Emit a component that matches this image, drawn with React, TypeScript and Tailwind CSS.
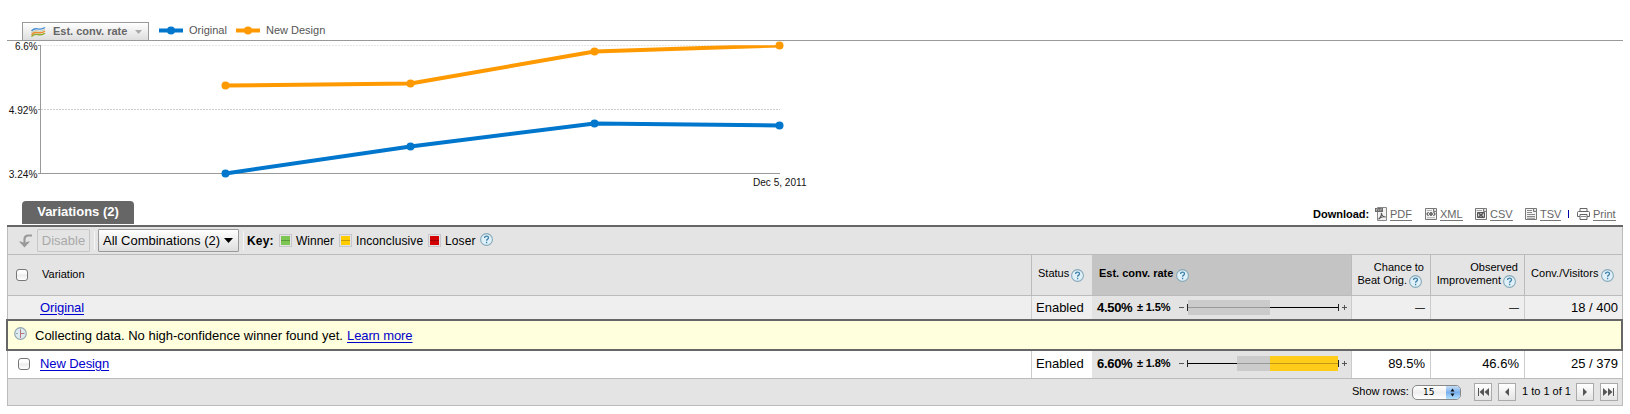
import React from "react";

const originalPoints: [number, number][] = [
  [225.5, 132.5],
  [410.5, 105.5],
  [594.5, 82.5],
  [779.5, 84.5],
];
const newDesignPoints: [number, number][] = [
  [225.5, 44.5],
  [410.5, 42.5],
  [594.5, 10.5],
  [779.5, 4.5],
];

function Series({ points, color }: { points: [number, number][]; color: string }) {
  return (
    <g>
      <polyline
        points={points.map((p) => p.join(",")).join(" ")}
        fill="none"
        stroke={color}
        strokeWidth="4"
        strokeLinejoin="round"
        clipPath="url(#plot)"
      />
      {points.map(([x, y]) => (
        <circle key={x} cx={x} cy={y} r="4" fill={color} />
      ))}
    </g>
  );
}

function Help({ className = "" }: { className?: string }) {
  return (
    <svg className={`size-[13px] shrink-0 ${className}`} viewBox="0 0 13 13">
      <circle cx="6.5" cy="6.5" r="5.9" fill="#dff0f8" stroke="#86a9b9" strokeWidth="1.1" />
      <path
        d="M4.6 5C4.6 2.5 8.5 2.6 8.5 4.9C8.5 6.1 6.6 6.2 6.6 7.8M6.6 8.8V10.2"
        fill="none"
        stroke="#3f82ab"
        strokeWidth="1.3"
      />
    </svg>
  );
}

function Check({ className = "" }: { className?: string }) {
  return (
    <span
      className={`block size-[12px] shrink-0 rounded-[3px] border border-[#777] bg-linear-to-b from-white from-30% via-[#ececec] via-50% to-white ${className}`}
    />
  );
}

function Swatch({ fill, line }: { fill: string; line: string }) {
  return (
    <span className="flex size-[13px] shrink-0 items-center justify-center border border-[#c6c6cc]">
      <span className={`flex size-[9px] items-center ${fill}`}>
        <span className={`h-px w-full ${line}`} />
      </span>
    </span>
  );
}

function LegendMark({ color, className }: { color: string; className: string }) {
  return (
    <svg className={`h-[9px] w-[24px] shrink-0 ${className}`} viewBox="0 0 24 9">
      <path d="M0 4.5H24" stroke={color} strokeWidth="4" />
      <circle cx="12" cy="4.5" r="4" fill={color} />
    </svg>
  );
}

function DocIcon({ kind }: { kind: "pdf" | "xml" | "csv" | "tsv" }) {
  if (kind === "pdf") {
    return (
      <svg className="mr-[3px] h-[14px] w-[12px] shrink-0" viewBox="0 0 12 14">
        <path d="M2.5 .5H11.5V13.5H2.5Z" fill="#f2f2f2" stroke="#888" />
        <path d="M0 1H8V5H0Z" fill="#6a6a6a" />
        <path d="M1.5 4V2H2.8M3.8 2V4M5.8 4V2H7" stroke="#ccc" strokeWidth=".7" fill="none" />
        <path
          d="M3.5 12.2C5.5 10.7 7 7.7 6.3 6C6.8 8.5 8.3 10 10.7 10C7.6 9.2 5.3 10.4 3.5 12.2Z"
          fill="none"
          stroke="#555"
          strokeWidth="1.2"
        />
      </svg>
    );
  }
  return (
    <svg className="mr-[3px] h-[14px] w-[12px] shrink-0" viewBox="0 0 12 14">
      <path d="M.5 1.5H11.5V12.5H.5Z" fill="#f4f4f4" stroke="#777" />
      <path d="M8.5 1.5V4.5H11.5" fill="#ccc" stroke="#777" />
      {kind === "xml" && (
        <g fill="none" stroke="#555">
          <path d="M3.5 5.2L1.9 7L3.5 8.8M8.5 5.2L10.1 7L8.5 8.8" strokeWidth="1.1" />
          <circle cx="6" cy="7" r="1.4" fill="#888" />
          <path d="M2 3.5H7M2 10.7H10" strokeOpacity=".4" />
        </g>
      )}
      {kind === "csv" && (
        <g fill="none" stroke="#555">
          <path d="M1.5 3.5H7" strokeOpacity=".5" />
          <path d="M2.5 5.5H9.5V10.5H2.5Z" fill="#ccc" />
          <path d="M3.6 6L8.2 10.2M8.2 6L3.6 10.2" strokeWidth="1.5" />
        </g>
      )}
      {kind === "tsv" && (
        <path d="M2 3.5H7M2 5.5H7M2 7.5H10M2 9.5H10M2 11.2H10" stroke="#888" />
      )}
    </svg>
  );
}

function Download({ kind, label, width }: { kind: "pdf" | "xml" | "csv" | "tsv"; label: string; width: string }) {
  return (
    <span className={`flex items-center text-[11px] text-[#666] ${width}`}>
      <DocIcon kind={kind} />
      <a className="block h-[13px] border-b border-[#777] leading-[13px]">{label}</a>
    </span>
  );
}

function RateBar({ start, mid, end }: { start: number; mid: number; end: number }) {
  return (
    <svg className="h-[15px] w-[172px] shrink-0" viewBox="0 0 172 15">
      <path d="M1 7.5H6" stroke="#555" />
      <path d="M10 7.5H160" stroke="#000" />
      <rect x={start} y="0" width={mid - start} height="15" fill="#cbcbcb" />
      {end > mid && <rect x={mid} y="0" width={end - mid} height="15" fill="#ffcc1a" />}
      <path d={`M${start} 7.5H${mid}`} stroke="#999" />
      {end > mid && <path d={`M${mid} 7.5H${end}`} stroke="#c39a18" />}
      <path d="M9.5 4V11M160.5 4V11" stroke="#222" />
      <path d="M164 7.5H169M166.5 5V10" stroke="#555" />
    </svg>
  );
}

function Dash() {
  return <span className="text-[10px]">—</span>;
}

function PagerButton({ d, className }: { d: string; className: string }) {
  return (
    <button
      className={`flex size-[18px] shrink-0 items-center justify-center border border-[#aaa] bg-linear-to-b from-white to-[#e4e4e4] ${className}`}
    >
      <svg className="h-[8px] w-[12px]" viewBox="0 0 12 8">
        <path d={d} fill="#555" />
      </svg>
    </button>
  );
}

function Row({
  rate,
  margin,
  bar,
  chance,
  improvement,
  visitors,
  name,
  checkbox,
  className,
  cell,
}: {
  rate: string;
  margin: string;
  bar: [number, number, number];
  chance: React.ReactNode;
  improvement: React.ReactNode;
  visitors: string;
  name: string;
  checkbox: boolean;
  className: string;
  cell: string;
}) {
  return (
    <div className={`flex border-x border-[#bbb] text-[13px] ${className}`}>
      <div className={`flex w-[1024px] items-center border-r border-[#ccc] ${cell}`}>
        <div className="w-[32px] pl-[10px]">{checkbox && <Check />}</div>
        <a className="tracking-[-0.1px] text-[#0000cc] underline underline-offset-2">{name}</a>
      </div>
      <div className={`flex w-[60px] items-center pl-[4px] ${cell}`}>Enabled</div>
      <div className={`flex w-[260px] items-center border-r border-[#ccc] bg-[#e3e3e3] pl-[5px] font-bold ${cell}`}>
        <span className="w-[40px] text-[13px] tracking-[-0.3px]">{rate}</span>
        <span className="w-[41px] whitespace-nowrap text-[11px] tracking-[-0.15px]">{margin}</span>
        <RateBar start={bar[0]} mid={bar[1]} end={bar[2]} />
      </div>
      <div className={`flex w-[79px] items-center justify-end border-r border-[#ccc] pr-[5px] ${cell}`}>{chance}</div>
      <div className={`flex w-[94px] items-center justify-end border-r border-[#ccc] pr-[5px] ${cell}`}>{improvement}</div>
      <div className={`flex flex-1 items-center justify-end pr-[4px] ${cell}`}>{visitors}</div>
    </div>
  );
}

export default function App() {
  return (
    <div className="h-[414px] w-[1630px] overflow-hidden bg-white pt-[22px] font-['Liberation_Sans',Arial,sans-serif] text-black">
      <div className="ml-[7px] flex h-[19px] w-[1616px] border-b border-[#999] pl-[15px]">
        <div className="flex h-[18px] w-[127px] items-center border border-b-0 border-[#999] bg-linear-to-b from-white to-[#dedede] pl-[8px]">
          <svg className="h-[12px] w-[15px]" viewBox="0 0 15 12">
            <g fill="none" strokeWidth="1.4">
              <path d="M.5 5C5 -.5 8 6 14 1.5" stroke="#4a90d9" />
              <path d="M.5 7C5 1.5 8 8 14 3.5" stroke="#c9d2b0" />
              <path d="M.5 8.7C5 3.2 8 9.7 14 5.2" stroke="#f08a30" />
              <path d="M.5 10.6C5 5.1 8 11.6 14 7.3" stroke="#8aac2c" />
            </g>
          </svg>
          <span className="ml-[7px] w-[82px] whitespace-nowrap text-[11px] font-bold text-[#666]">Est. conv. rate</span>
          <svg className="h-[4px] w-[7px]" viewBox="0 0 7 4">
            <path d="M0 0H7L3.5 4Z" fill="#aaa" />
          </svg>
        </div>
        <div className="flex h-[16px] items-center text-[11px] text-[#555]">
          <LegendMark color="#0077cc" className="ml-[10px]" />
          <span className="ml-[6px] w-[47px]">Original</span>
          <LegendMark color="#ff9900" className="" />
          <span className="ml-[6px] whitespace-nowrap">New Design</span>
        </div>
      </div>

      <svg className="block h-[160px] w-[820px] font-['Liberation_Sans',Arial,sans-serif]" viewBox="0 0 820 160">
        <clipPath id="plot">
          <path d="M40 4.3H781V140H40Z" />
        </clipPath>
        <path d="M41 4.5H780" stroke="#e6e6e6" strokeDasharray="2 1" />
        <path d="M41 68.5H780" stroke="#ccc" strokeDasharray="2 1" />
        <path d="M38 4.5H41M38 68.5H41M38 132.5H780M40.5 4V133" stroke="#999" fill="none" />
        <Series points={originalPoints} color="#0077cc" />
        <Series points={newDesignPoints} color="#ff9900" />
        <g fontSize="10" fill="#111">
          <text x="15" y="9" textLength="22.7" lengthAdjust="spacingAndGlyphs">6.6%</text>
          <text x="8.7" y="73" textLength="28.7" lengthAdjust="spacingAndGlyphs">4.92%</text>
          <text x="8.7" y="137" textLength="28.7" lengthAdjust="spacingAndGlyphs">3.24%</text>
          <text x="753" y="145" textLength="53.5" lengthAdjust="spacingAndGlyphs">Dec 5, 2011</text>
        </g>
      </svg>

      <div className="ml-[7px] flex h-[24px] w-[1616px] items-start pl-[15px]">
        <div className="flex h-[23px] w-[112px] items-center justify-center rounded-t-[4px] bg-[#666] pb-[2px] text-[13px] font-bold text-white">
          Variations (2)
        </div>
        <div className="ml-[1179px] flex h-[26px] items-center whitespace-nowrap">
          <span className="w-[62px] text-[11px] font-bold">Download:</span>
          <Download kind="pdf" label="PDF" width="w-[50px]" />
          <Download kind="xml" label="XML" width="w-[50px]" />
          <Download kind="csv" label="CSV" width="w-[50px]" />
          <Download kind="tsv" label="TSV" width="w-[43px]" />
          <span className="h-[8px] w-px bg-[#0000aa]" />
          <svg className="ml-[8px] mr-[3px] h-[12px] w-[13px]" viewBox="0 0 13 12">
            <g fill="#fff" stroke="#666">
              <path d="M3 3.5V.5H10V3.5" />
              <path d="M.5 8.5V4.5Q.5 3.5 1.5 3.5H11.5Q12.5 3.5 12.5 4.5V8.5Z" />
              <path d="M3 6.5H10V11.5H3Z" />
            </g>
            <path d="M4 8.5H9" stroke="#888" />
          </svg>
          <a className="block h-[13px] border-b border-[#777] text-[11px] leading-[13px] text-[#666]">Print</a>
        </div>
      </div>

      <div className="ml-[7px] w-[1616px]">
        <div className="h-[2px] bg-[#666]" />
        <div className="flex h-[28px] items-center whitespace-nowrap border-x border-b border-[#bbb] bg-[#e4e4e4]">
          <svg className="ml-[11px] h-[14px] w-[14px]" viewBox="0 0 14 14">
            <path d="M13 1.5H9.5Q5.5 1.5 5.5 5.5V9" fill="none" stroke="#999" strokeWidth="2.2" />
            <path d="M0 7.5H2L5.5 9L9 7.5H11L5.5 13.5Z" fill="#999" />
          </svg>
          <button className="ml-[4px] h-[23px] w-[53px] rounded-[1px] border border-[#c6c6c6] text-[13px] leading-[21px] text-[#a9a9a9]">
            Disable
          </button>
          <span className="ml-[4px] h-[19px] w-px bg-[#f6f6f6]" />
          <button className="ml-[3px] flex h-[23px] w-[141px] items-center rounded-[1px] border border-[#999] bg-linear-to-b from-white to-[#dedede] pl-[4px] text-[13px]">
            <span className="w-[121px] text-left">All Combinations (2)</span>
            <svg className="h-[5px] w-[9px]" viewBox="0 0 9 5">
              <path d="M0 0H9L4.5 5Z" fill="#000" />
            </svg>
          </button>
          <span className="ml-[4px] h-[19px] w-px bg-[#f6f6f6]" />
          <span className="ml-[3px] w-[32px] text-[12px] font-bold tracking-[0.2px]">Key:</span>
          <Swatch fill="bg-[#7dc653]" line="bg-[#5a9a38]" />
          <span className="ml-[4px] w-[43px] text-[12px]">Winner</span>
          <Swatch fill="bg-[#ffcc00]" line="bg-[#c89c00]" />
          <span className="ml-[4px] w-[72px] text-[12px] tracking-[0.1px]">Inconclusive</span>
          <Swatch fill="bg-[#d20000]" line="bg-[#a00000]" />
          <span className="ml-[4px] w-[35px] text-[12px] tracking-[0.1px]">Loser</span>
          <Help className="-mt-[2px]" />
        </div>

        <div className="flex h-[41px] whitespace-nowrap border-x border-b border-[#bbb] bg-[#e4e4e4] text-[11px] leading-[13px]">
          <div className="flex w-[1024px] items-center border-r border-[#bbb] pl-[8px]">
            <Check className="-mt-px" />
            <span className="-mt-[2px] ml-[14px]">Variation</span>
          </div>
          <div className="flex w-[60px] items-center pl-[6px]">
            <span className="-mt-[3px] w-[33px]">Status</span>
            <Help />
          </div>
          <div className="flex w-[260px] items-center border-r border-[#bbb] bg-[#c4c4c4] pl-[7px]">
            <span className="-mt-[3px] w-[77px] font-bold">Est. conv. rate</span>
            <Help />
          </div>
          <div className="flex w-[79px] flex-col items-end justify-center border-r border-[#bbb] pb-[2px] pr-[6px]">
            <span>Chance to</span>
            <span className="mr-[2px] flex items-center gap-[2px]">
              Beat Orig.
              <Help className="relative top-px" />
            </span>
          </div>
          <div className="flex w-[94px] flex-col items-end justify-center border-r border-[#bbb] pb-[2px] pr-[6px]">
            <span>Observed</span>
            <span className="mr-[2px] flex items-center gap-[2px]">
              Improvement
              <Help className="relative top-px" />
            </span>
          </div>
          <div className="flex flex-1 items-center pl-[6px]">
            <span className="-mt-[3px] w-[70px] tracking-[0.05px]">Conv./Visitors</span>
            <Help />
          </div>
        </div>

        <Row
          name="Original"
          checkbox={false}
          rate="4.50%"
          margin="± 1.5%"
          bar={[10, 92, 92]}
          chance={<Dash />}
          improvement={<Dash />}
          visitors="18 / 400"
          className="h-[23px] bg-[#efefef]"
          cell="pb-0"
        />

        <div className="-ml-px flex h-[32px] w-[1617px] items-center border-2 border-[#666] bg-[#ffffdd] text-[13px]">
          <svg className="-mt-[3px] ml-[6px] h-[13px] w-[13px]" viewBox="0 0 13 13">
            <circle cx="6.5" cy="6.5" r="5.8" fill="#dcebf1" stroke="#94a6ae" strokeWidth="1.2" />
            <path d="M6.5 1.5V5M2 6.5H4" stroke="#9cacb2" fill="none" />
            <path d="M6.5 3V11M6.5 6.5H10.5" stroke="#b87474" fill="none" />
          </svg>
          <span className="ml-[8px] mt-[2px] w-[312px] whitespace-nowrap">
            Collecting data. No high-confidence winner found yet.
          </span>
          <a className="mt-[2px] tracking-[-0.1px] text-[#0000cc] underline underline-offset-2">Learn more</a>
        </div>

        <Row
          name="New Design"
          checkbox={true}
          rate="6.60%"
          margin="± 1.8%"
          bar={[59, 92, 160]}
          chance="89.5%"
          improvement="46.6%"
          visitors="25 / 379"
          className="h-[27px] bg-white"
          cell="pb-[2px]"
        />

        <div className="flex h-[28px] items-center whitespace-nowrap border border-[#bbb] bg-[#e4e4e4] text-[11px]">
          <span className="-mt-px ml-[1344px] w-[60px]">Show rows:</span>
          <div className="flex h-[15px] w-[49px] items-center overflow-hidden rounded-[5px] border border-[#888] bg-linear-to-b from-white via-[#eee] to-white pl-[10px] font-['DejaVu_Sans',sans-serif] text-[9px]">
            <span className="flex-1 pt-px">15</span>
            <svg className="h-[13px] w-[14px] bg-linear-to-b from-[#c4dcf7] via-[#79b0ec] to-[#b4e0ff]" viewBox="0 0 14 13">
              <path d="M4.5 5.5L6.5 2.5L8.5 5.5ZM4.5 7.5L6.5 10.5L8.5 7.5Z" fill="#111" />
            </svg>
          </div>
          <PagerButton className="ml-[13px]" d="M1 0H2V8H1ZM7 0V8L2.5 4ZM12 0V8L7.5 4Z" />
          <PagerButton className="ml-[6px]" d="M8 0V8L4 4Z" />
          <span className="-mt-px ml-[6px] w-[54px]">1 to 1 of 1</span>
          <PagerButton className="" d="M4 0V8L8 4Z" />
          <PagerButton className="ml-[6px]" d="M11 0H10V8H11ZM5 0V8L9.5 4ZM0 0V8L4.5 4Z" />
        </div>
      </div>
    </div>
  );
}
